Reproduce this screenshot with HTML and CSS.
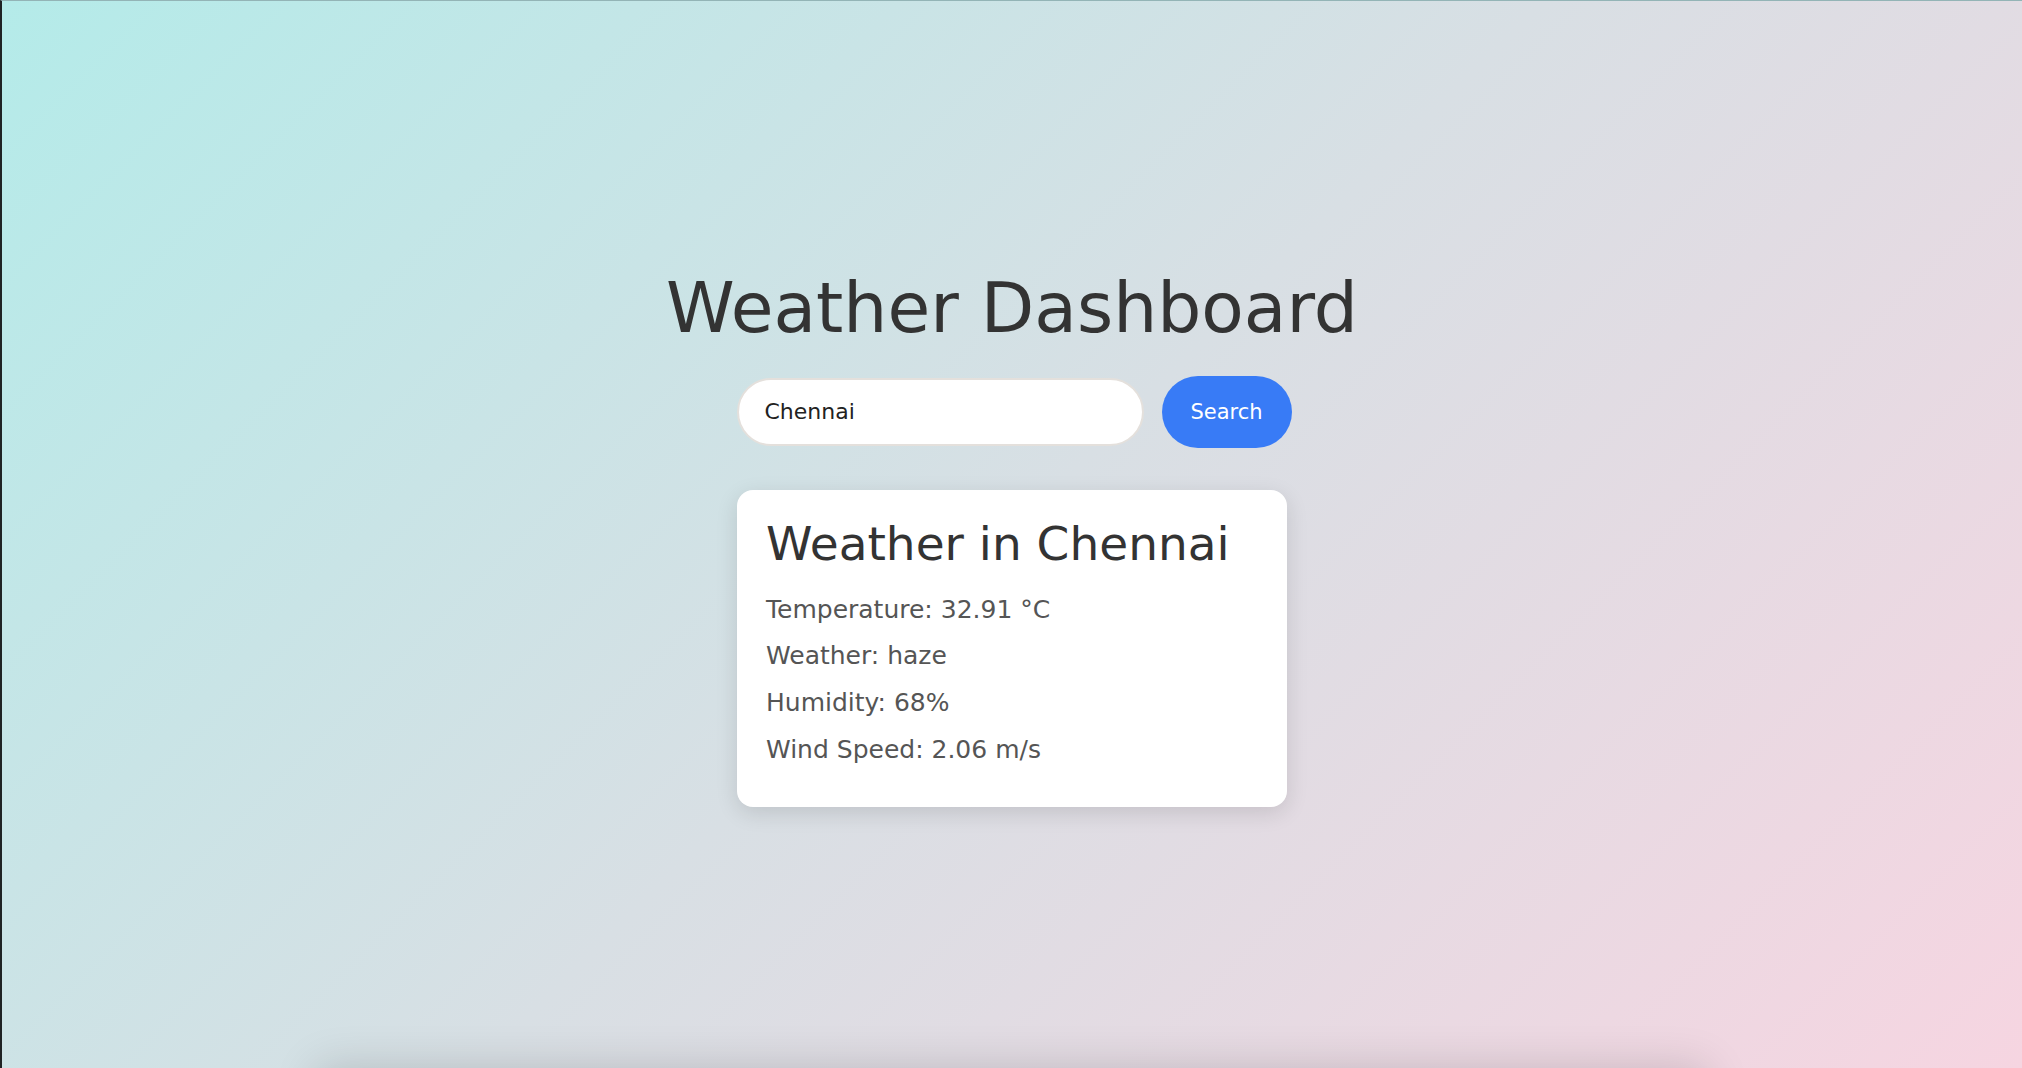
FILE: index.html
```html
<!DOCTYPE html>
<html lang="en">
<head>
<meta charset="utf-8">
<title>Weather Dashboard</title>
<link rel="stylesheet" href="styles.css">
</head>
<body>
  <main class="page">
    <h1 class="title">Weather Dashboard</h1>
    <div class="search-row">
      <input class="city-input" type="text" value="Chennai">
      <button class="search-btn" type="button">Search</button>
    </div>
    <section class="card">
      <h2 class="card-title">Weather in Chennai</h2>
      <p class="row">Temperature: 32.91 °C</p>
      <p class="row">Weather: haze</p>
      <p class="row">Humidity: 68%</p>
      <p class="row">Wind Speed: 2.06 m/s</p>
    </section>
  </main>
  <footer class="below"></footer>
</body>
</html>
```
FILE: styles.css
```css
html, body {
  margin: 0;
  padding: 0;
}
html {
  overflow: hidden;
}
body {
  font-family: "DejaVu Sans", "Liberation Sans", sans-serif;
  background: linear-gradient(135deg, #b4ebe9 0%, #d8dfe4 50%, #f6d5e1 100%);
  background-attachment: fixed;
  border-left: 2px solid #1f2324;
  border-top: 1px solid #93b4b6;
}
.page {
  box-sizing: border-box;
  height: calc(100vh - 1px);
  padding-top: 5px;
  display: flex;
  flex-direction: column;
  align-items: center;
  justify-content: center;
}
.title {
  margin: 0;
  font-size: 69.5px;
  line-height: 81.6px;
  font-weight: 400;
  color: #333333;
}
.search-row {
  display: flex;
  align-items: center;
  gap: 18px;
  margin-top: 26.7px;
  margin-left: 4px;
}
.city-input {
  box-sizing: border-box;
  width: 407px;
  height: 68px;
  border: 2px solid #e4e0dc;
  border-radius: 34px;
  padding: 0 26px;
  font-family: inherit;
  font-size: 22px;
  color: #222222;
  background: #ffffff;
  outline: none;
}
.search-btn {
  box-sizing: border-box;
  width: 130px;
  height: 72px;
  border: none;
  border-radius: 36px;
  background: #387bf6;
  color: #ffffff;
  font-family: inherit;
  font-size: 21px;
  padding: 0;
}
.card {
  box-sizing: border-box;
  width: 550px;
  margin-top: 42px;
  padding: 27px 29px 33px;
  background: #ffffff;
  border-radius: 16px;
  box-shadow: 0 6px 22px rgba(0, 0, 0, 0.12);
}
.card-title {
  margin: 0 0 16px;
  font-size: 47px;
  line-height: 54px;
  font-weight: 400;
  color: #333333;
}
.row {
  margin: 0;
  font-size: 25px;
  line-height: 46.7px;
  color: #555555;
}
.below {
  width: 1390px;
  height: 80px;
  margin: 0 auto;
  box-shadow: 0 0 45px rgba(0, 0, 0, 0.16);
}
```
